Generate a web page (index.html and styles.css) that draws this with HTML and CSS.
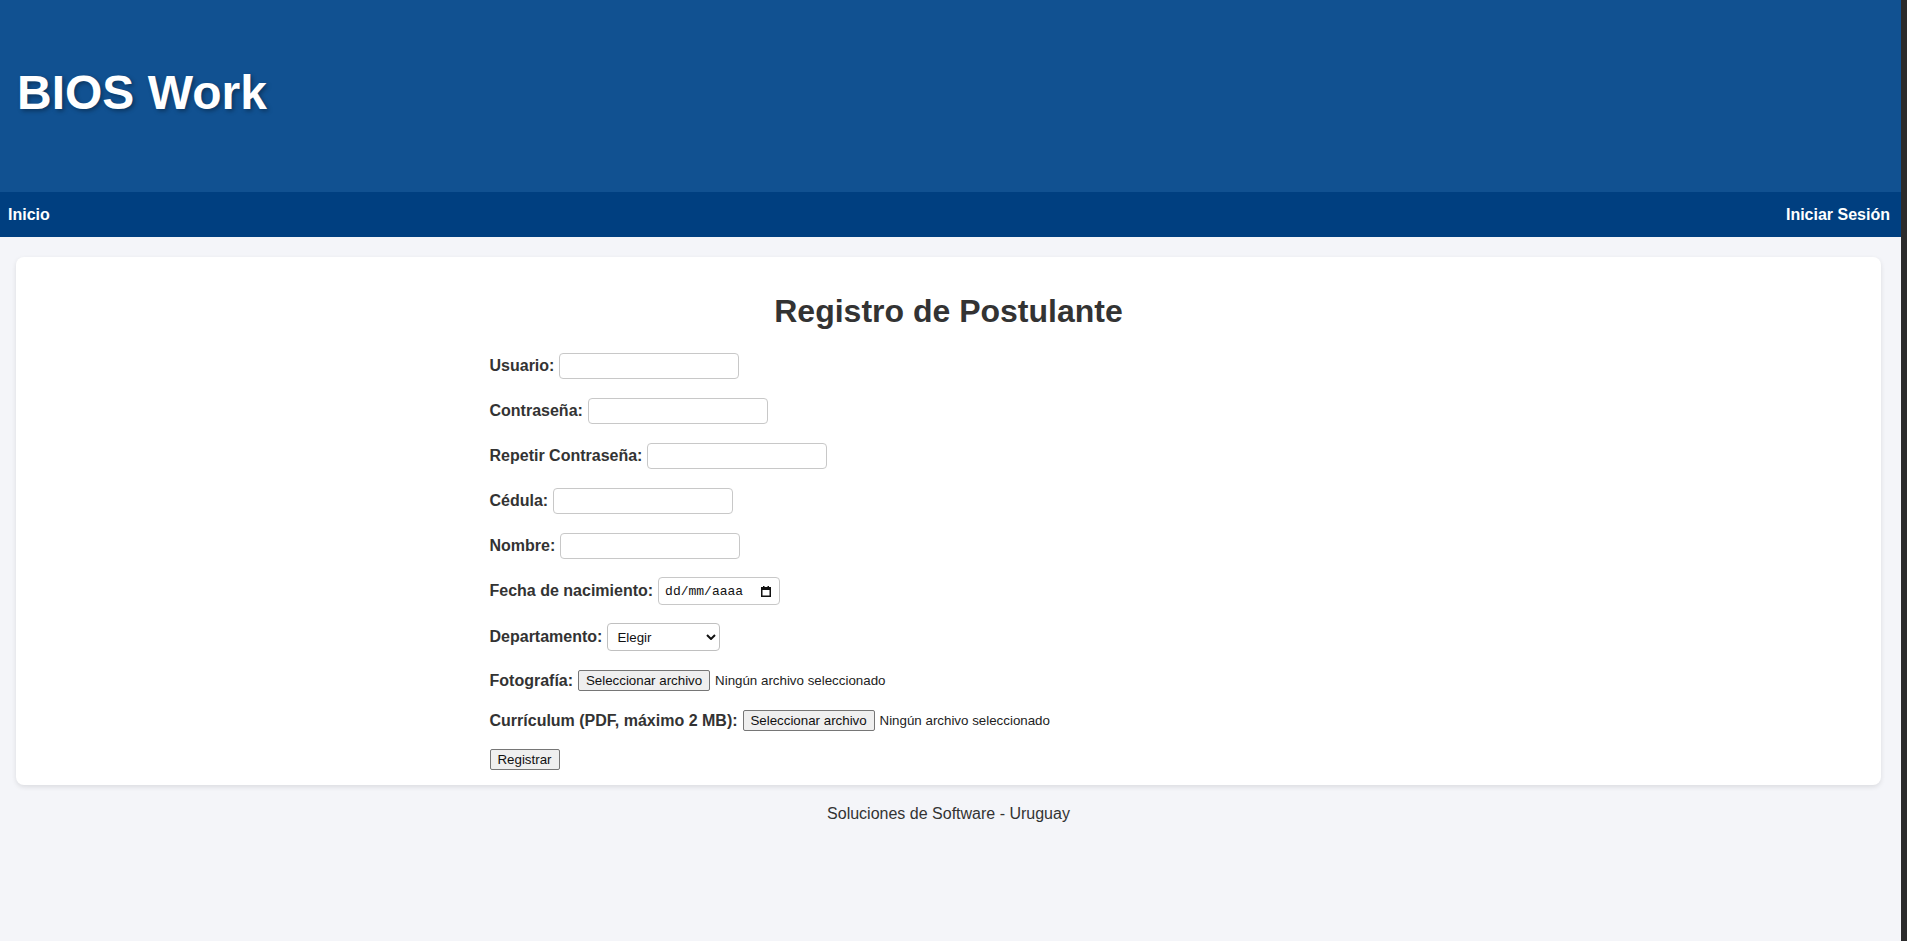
FILE: index.html
```html
<!DOCTYPE html>
<html lang="es">
<head>
<meta charset="utf-8">
<title>BIOS Work - Registro de Postulante</title>
<link rel="stylesheet" href="styles.css">
</head>
<body>
<div class="app">
  <div class="page">
    <header class="site-header">
      <h1 class="brand">BIOS Work</h1>
    </header>
    <nav class="site-nav">
      <a class="nav-link" href="#">Inicio</a>
      <a class="nav-link" href="#">Iniciar Sesión</a>
    </nav>
    <main class="card">
      <h2 class="card-title">Registro de Postulante</h2>
      <form class="reg-form">
        <div class="row"><label class="lbl">Usuario:</label><input class="txt" type="text"></div>
        <div class="row"><label class="lbl">Contraseña:</label><input class="txt" type="password"></div>
        <div class="row"><label class="lbl">Repetir Contraseña:</label><input class="txt" type="password"></div>
        <div class="row"><label class="lbl">Cédula:</label><input class="txt" type="text"></div>
        <div class="row"><label class="lbl">Nombre:</label><input class="txt" type="text"></div>
        <div class="row row-date"><label class="lbl">Fecha de nacimiento:</label>
          <div class="date-field"><span class="date-text">dd/mm/aaaa</span>
            <svg class="cal-icon" width="10" height="11" viewBox="0 0 10 11"><rect x="0.75" y="1.75" width="8.5" height="8.5" fill="none" stroke="#111" stroke-width="1.5"/><rect x="0" y="1" width="10" height="3" fill="#111"/><rect x="2" y="0" width="1.5" height="2" fill="#111"/><rect x="6.5" y="0" width="1.5" height="2" fill="#111"/></svg>
          </div>
        </div>
        <div class="row row-sel"><label class="lbl">Departamento:</label>
          <div class="sel-wrap">
            <select class="sel"><option>Elegir</option></select>
            <svg class="chev" width="10" height="6" viewBox="0 0 10 6"><path d="M1 1 L5 5 L9 1" fill="none" stroke="#111" stroke-width="2"/></svg>
          </div>
        </div>
        <div class="row row-file1"><label class="lbl">Fotografía:</label><button type="button" class="btn">Seleccionar archivo</button><span class="file-note">Ningún archivo seleccionado</span></div>
        <div class="row row-file2"><label class="lbl">Currículum (PDF, máximo 2 MB):</label><button type="button" class="btn">Seleccionar archivo</button><span class="file-note">Ningún archivo seleccionado</span></div>
        <div class="row row-submit"><button type="button" class="btn">Registrar</button></div>
      </form>
    </main>
    <footer class="site-footer">Soluciones de Software - Uruguay</footer>
  </div>
  <div class="edge"></div>
</div>
</body>
</html>
```
FILE: styles.css
```css
html, body {
  margin: 0;
  padding: 0;
}
body {
  font-family: "Liberation Sans", Arial, sans-serif;
  color: #333;
  background: #f4f5f9;
}
.app {
  display: grid;
  grid-template-columns: 1fr 6px;
  min-height: 100vh;
}
.page {
  background: #f4f5f9;
  min-width: 0;
}
.edge {
  background: #2b2b2b;
}
.site-header {
  height: 192px;
  box-sizing: border-box;
  background: #115191;
  display: flex;
  align-items: center;
  padding: 0 0 8px 17px;
}
.brand {
  margin: 0;
  font-size: 48px;
  font-weight: bold;
  color: #fff;
  text-shadow: 2px 2px 4px rgba(0, 0, 0, 0.35);
}
.site-nav {
  height: 45px;
  background: #003f80;
  display: flex;
  align-items: center;
  justify-content: space-between;
  padding: 0 11px 0 8px;
}
.nav-link {
  color: #fff;
  font-weight: bold;
  font-size: 16px;
  text-decoration: none;
}
.card {
  display: block;
  background: #fff;
  margin: 20px 20px 0 16px;
  border-radius: 8px;
  box-shadow: 0 2px 5px rgba(0, 0, 0, 0.1);
  padding: 20px 20px 6px;
}
.card-title {
  margin: 16px 0 13px;
  text-align: center;
  font-size: 32px;
  font-weight: bold;
  color: #333;
}
.reg-form {
  width: 918px;
  margin: 0 auto;
}
.row {
  display: flex;
  align-items: center;
  gap: 5px;
  height: 45px;
}
.row-date, .row-sel { height: 46px; }
.row-file1 { height: 41px; }
.row-file2, .row-submit { height: 39px; }
.lbl {
  font-weight: bold;
  font-size: 16px;
  color: #333;
  white-space: nowrap;
}
.txt {
  width: 180px;
  height: 26px;
  box-sizing: border-box;
  border: 1px solid #c8c8c8;
  border-radius: 4px;
  padding: 4px;
  margin: 0;
  background: #fff;
}
.date-field {
  width: 122px;
  height: 28px;
  box-sizing: border-box;
  border: 1px solid #c8c8c8;
  border-radius: 4px;
  display: flex;
  align-items: center;
  justify-content: space-between;
  padding: 0 8px 0 6px;
  background: #fff;
}
.date-text {
  font-family: "Liberation Mono", "DejaVu Sans Mono", monospace;
  font-size: 13px;
  color: #111;
}
.cal-icon { display: block; }
.sel-wrap {
  position: relative;
  width: 113px;
  height: 28px;
}
.sel {
  -webkit-appearance: none;
  appearance: none;
  width: 113px;
  height: 28px;
  box-sizing: border-box;
  border: 1px solid #c0c0c0;
  border-radius: 4px;
  padding: 0 0 0 9px;
  margin: 0;
  background: #fff;
  font-family: "Liberation Sans", Arial, sans-serif;
  font-size: 13.33px;
  color: #111;
}
.chev {
  position: absolute;
  right: 4px;
  top: 11px;
  pointer-events: none;
}
.btn {
  font-family: "Liberation Sans", Arial, sans-serif;
  font-size: 13.33px;
  color: #111;
  background: #efefef;
  border: 1px solid #767676;
  border-radius: 2px;
  height: 21px;
  padding: 0 6px;
  margin: 0;
  box-sizing: border-box;
  line-height: 19px;
}
.row-file1 .btn, .row-file2 .btn { width: 132px; }
.row-submit .btn { width: 70px; }
.file-note {
  font-size: 13.33px;
  color: #222;
}
.site-footer {
  margin: 20px 20px 0 16px;
  text-align: center;
  font-size: 16px;
  color: #333;
}
```
